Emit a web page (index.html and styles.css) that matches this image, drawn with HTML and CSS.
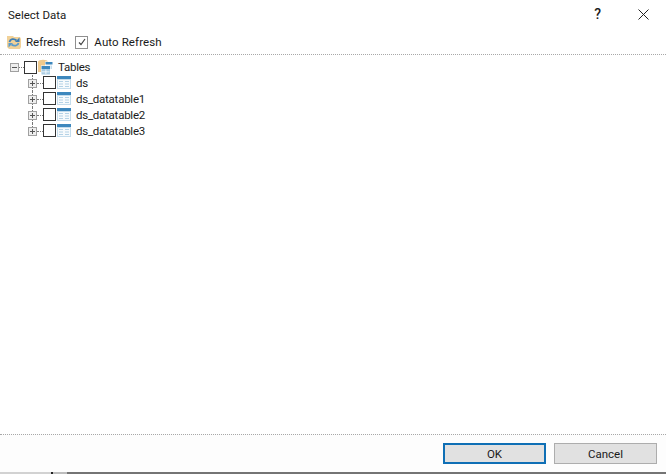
FILE: index.html
```html
<!DOCTYPE html>
<html lang="en">
<head>
    <meta charset="UTF-8">
    <title>Select Data</title>
    <link rel="stylesheet" href="styles.css">
</head>
<body>
    <div class="dialog">
        <!-- Title bar -->
        <div class="title-bar">
            <span class="title">Select Data</span>
            <span class="help">?</span>
            <svg class="close" width="11" height="11" viewBox="0 0 11 11">
                <path d="M.5 .5L10.500 10.500M10.500 .5L.5 10.500" stroke="#222" stroke-width="1" fill="none"/>
            </svg>
        </div>

        <!-- Toolbar -->
        <div class="toolbar">
            <svg class="refresh-icon" width="16" height="16" viewBox="0 0 16 16">
                <path d="M1 2h6l1 1h6l1 2v8l-1 2H3l-2-2z" fill="#f1d198"/>
                <path d="M3.500 8C4 5 8 4 10.500 6.500" stroke="#3f7fb5" stroke-width="1.800" fill="none"/>
                <path d="M9 8h4.500V3.500z" fill="#3f7fb5"/>
                <path d="M12.500 9C12 12 8 12.500 5.500 10.500" stroke="#5b9bcb" stroke-width="1.800" fill="none"/>
                <path d="M7 9H2.500v4.500z" fill="#5b9bcb"/>
            </svg>
            <span class="tool-label">Refresh</span>
            <span class="auto-check">
                <svg width="8" height="8" viewBox="0 0 8 8">
                    <path d="M1 4.500l2 2L7 1" stroke="#444" stroke-width="1.200" fill="none"/>
                </svg>
            </span>
            <span class="tool-label auto-label">Auto Refresh</span>
        </div>

        <!-- Tables tree -->
        <div class="tree">
            <div class="tree-row root">
                <span class="expander minus"></span>
                <span class="dots"></span>
                <span class="check"></span>
                <svg class="tables-icon" width="16" height="16" viewBox="0 0 16 16">
                    <path d="M1 3c0-3 10-3 10 0v10H1z" fill="#efc98c"/>
                    <path d="M8 2.500h8V11H8z" fill="#fff"/>
                    <path d="M8.500 3h7v2.500h-7z" fill="#3d87bd"/>
                    <path d="M9 6.500h6V10H9z" fill="#c4dcec"/>
                    <path d="M4 6.500h9.500V16H4z" fill="#fff"/>
                    <path d="M4.500 7h8.500v3H4.500z" fill="#3d87bd"/>
                    <path d="M4.500 10h8.500v5.500H4.500z" fill="#a9cce3"/>
                    <path d="M8.500 10.500h.8v4.500h-.8zM5 12.500h7.500v.7H5z" fill="#fff"/>
                </svg>
                <span class="label">Tables</span>
            </div>
            <div class="tree-row child">
                <span class="expander plus"></span>
                <span class="dots"></span>
                <span class="check"></span>
                <svg class="table-icon" width="14" height="13" viewBox="0 0 14 13">
                    <use href="#table-shape"/>
                </svg>
                <span class="label">ds</span>
            </div>
            <div class="tree-row child">
                <span class="expander plus"></span>
                <span class="dots"></span>
                <span class="check"></span>
                <svg class="table-icon" width="14" height="13" viewBox="0 0 14 13">
                    <use href="#table-shape"/>
                </svg>
                <span class="label">ds_datatable1</span>
            </div>
            <div class="tree-row child">
                <span class="expander plus"></span>
                <span class="dots"></span>
                <span class="check"></span>
                <svg class="table-icon" width="14" height="13" viewBox="0 0 14 13">
                    <use href="#table-shape"/>
                </svg>
                <span class="label">ds_datatable2</span>
            </div>
            <div class="tree-row child">
                <span class="expander plus"></span>
                <span class="dots"></span>
                <span class="check"></span>
                <svg class="table-icon" width="14" height="13" viewBox="0 0 14 13">
                    <use href="#table-shape"/>
                </svg>
                <span class="label">ds_datatable3</span>
            </div>
        </div>

        <!-- Buttons -->
        <div class="footer">
            <button class="btn btn-default" type="button">OK</button>
            <button class="btn" type="button">Cancel</button>
        </div>
    </div>

    <!-- Shared table icon -->
    <svg class="defs" width="0" height="0">
        <symbol id="table-shape" viewBox="0 0 14 13">
            <path d="M0 0h14v13H0z" fill="#c4dcec"/>
            <path d="M0 0h14v3H0z" fill="#3d87bd"/>
            <path d="M1 4h12v8H1z" fill="#f7fafc"/>
            <path d="M2 5h4v1H2zM8 5h4v1H8zM2 7.500h4v1H2zM8 7.500h4v1H8zM2 10h4v1H2zM8 10h4v1H8z" fill="#b4d2e6"/>
        </symbol>
    </svg>
</body>
</html>
```

FILE: styles.css
```css
html, body {
    margin: 0;
    padding: 0;
}

body {
    width: 666px;
    height: 474px;
    overflow: hidden;
    background-color: #fff;
    font-family: Roboto, "Liberation Sans", sans-serif;
    font-size: 11.5px;
    color: #1a1a1a;
}

.dialog {
    height: 472px;
    display: flex;
    flex-direction: column;
    border-bottom: 2px solid;
    border-image: linear-gradient(to right, #d2d2d2 52px, #222 52px, #222 54px, #bdbdbd 54px, #bdbdbd 68px, #747474 68px) 1;
}

.title-bar {
    height: 30px;
    display: flex;
    align-items: center;
    padding: 0 17px 0 8px;
    flex-shrink: 0;
}

.title {
    flex: 1;
}

.help {
    font-size: 14px;
    font-weight: 500;
    margin: -2px 37px 0 0;
}

.close {
    margin-top: -2px;
}

.toolbar {
    height: 24px;
    display: flex;
    align-items: center;
    padding-left: 6px;
    border-bottom: 1px dotted #a8a8a8;
    flex-shrink: 0;
}

.refresh-icon {
    margin-right: 4px;
}

.tool-label {
    margin-top: -1px;
}

.auto-label {
    letter-spacing: 0.1px;
}

.auto-check {
    width: 11px;
    height: 11px;
    margin: 0 6px 0 10px;
    border: 1px solid #8f8f8f;
    display: flex;
    align-items: center;
    justify-content: center;
}

.tree {
    flex: 1;
    padding-top: 4px;
}

.tree-row {
    height: 16px;
    display: flex;
    align-items: center;
    position: relative;
    letter-spacing: -0.25px;
}

.root {
    padding-left: 10px;
}

.root .dots {
    width: 5px;
}

.child {
    padding-left: 28px;
}

/* vertical connector running down the children */
.child::before {
    content: "";
    position: absolute;
    left: 32px;
    top: 0;
    bottom: 0;
    border-left: 1px dotted #777;
}

.child:last-child::before {
    bottom: 8px;
}

.expander {
    width: 7px;
    height: 7px;
    border: 1px solid #a0a0a0;
    background-color: #eee;
    background-repeat: no-repeat;
    position: relative;
    flex-shrink: 0;
}

.minus {
    background-image: linear-gradient(#555, #555);
    background-size: 5px 1px;
    background-position: 1px 3px;
}

.plus {
    background-image: linear-gradient(#555, #555), linear-gradient(#555, #555);
    background-size: 5px 1px, 1px 5px;
    background-position: 1px 3px, 3px 1px;
}

.dots {
    width: 6px;
    border-top: 1px dotted #777;
    flex-shrink: 0;
}

.check {
    width: 11px;
    height: 11px;
    border: 1px solid #333;
    background-color: #fff;
    flex-shrink: 0;
}

.child .check {
    margin-top: -2px;
}

.tables-icon {
    margin-right: 5px;
}

.table-icon {
    margin: -2px 5px 0 1px;
}

.defs {
    position: absolute;
}

.footer {
    height: 38px;
    display: flex;
    justify-content: flex-end;
    gap: 8px;
    padding: 8px 9px 0 0;
    box-sizing: border-box;
    border-top: 1px dotted #a8a8a8;
    background-color: #fdfdfd;
    flex-shrink: 0;
}

.btn {
    width: 103px;
    height: 21px;
    padding: 0;
    border: 1px solid #adadad;
    background-color: #e1e1e1;
    color: #1a1a1a;
    font-family: inherit;
    font-size: 11.5px;
}

.btn-default {
    border: 2px solid #0f6fb5;
}
```
